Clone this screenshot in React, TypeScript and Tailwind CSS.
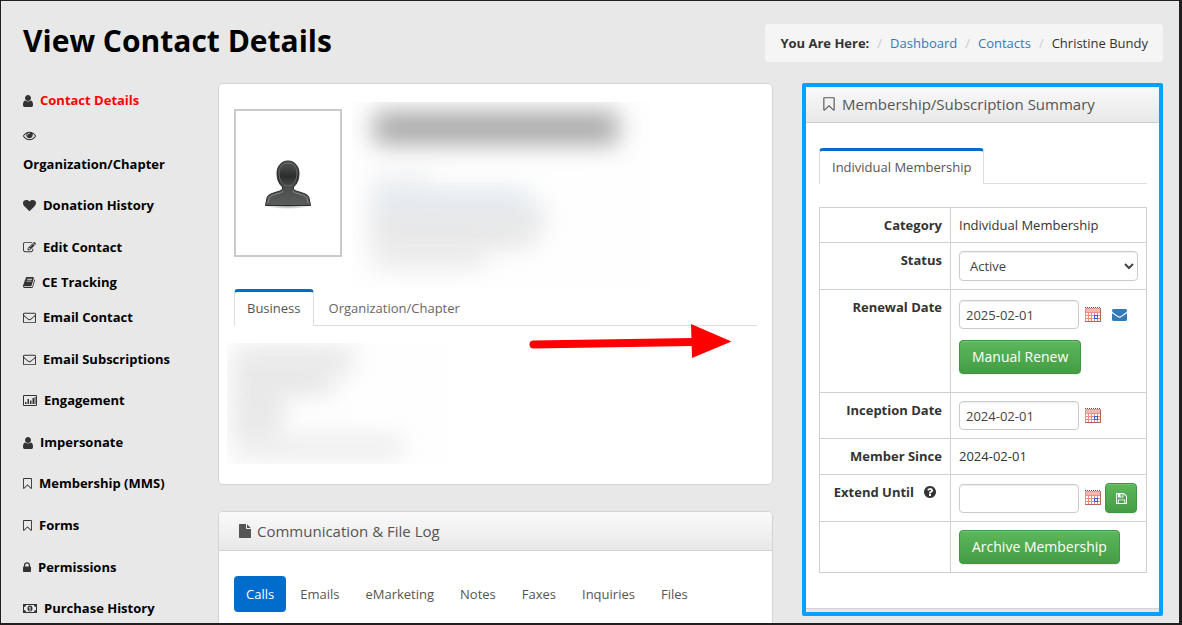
import React from 'react';

interface GlyphProps {
  viewBox: string;
  d: string;
  className?: string;
}

const Glyph: React.FC<GlyphProps> = ({ viewBox, d, className = '' }) => (
  <svg viewBox={viewBox} className={`shrink-0 ${className}`} fill="currentColor" aria-hidden="true">
    <path fillRule="evenodd" d={d} />
  </svg>
);

const glyphs = {
  user: {
    viewBox: '256 0 1280 1792',
    d: 'M1536 1399q0 109-62.5 187t-150.5 78h-854q-88 0-150.5-78t-62.5-187q0-85 8.5-160.5t31.5-152 58.5-131 94-89 134.5-34.5q131 128 313 128t313-128q76 0 134.5 34.5t94 89 58.5 131 31.5 152 8.5 160.5zm-256-887q0 159-112.5 271.5t-271.5 112.5-271.5-112.5-112.5-271.5 112.5-271.5 271.5-112.5 271.5 112.5 112.5 271.5z',
  },
  eye: {
    viewBox: '0 0 1792 1792',
    d: 'M1664 960q-152-236-381-353 61 104 61 225 0 185-131.5 316.5t-316.5 131.5-316.5-131.5-131.5-316.5q0-121 61-225-229 117-381 353 133 205 333.5 326.5t434.5 121.5 434.5-121.5 333.5-326.5zm-720-384q0-20-14-34t-34-14q-125 0-214.5 89.5t-89.5 214.5q0 20 14 34t34 14 34-14 14-34q0-86 61-147t147-61q20 0 34-14t14-34zm848 384q0 34-20 69-140 230-376.5 368.5t-499.5 138.5-499.5-139-376.5-368q-20-35-20-69t20-69q140-229 376.5-368t499.5-139 499.5 139 376.5 368q20 35 20 69z',
  },
  heart: {
    viewBox: '0 0 1792 1792',
    d: 'M896 1664q-26 0-44-18l-624-602q-10-8-27.5-26t-55.5-65.5-68-97.5-53.5-121-23.5-138q0-220 127-344t351-124q62 0 126.5 21.5t120 58 95.5 68.5 76 68q36-36 76-68t95.5-68.5 120-58 126.5-21.5q224 0 351 124t127 344q0 221-229 450l-623 600q-18 18-44 18z',
  },
  edit: {
    viewBox: '0 0 1792 1792',
    d: 'M888 1184l116-116-152-152-116 116v56h96v96h56zm440-720q-16-16-33 1l-350 350q-17 17-1 33t33-1l350-350q17-17 1-33zm80 594v190q0 119-84.5 203.5t-203.5 84.5h-832q-119 0-203.5-84.5t-84.5-203.5v-832q0-119 84.5-203.5t203.5-84.5h832q63 0 117 25 15 7 18 23 3 17-9 29l-49 49q-14 14-32 8-23-6-45-6h-832q-66 0-113 47t-47 113v832q0 66 47 113t113 47h832q66 0 113-47t47-113v-126q0-13 9-22l64-64q15-15 35-7t20 29zm-96-738l288 288-672 672h-288v-288zm444 132l-92 92-288-288 92-92q28-28 68-28t68 28l152 152q28 28 28 68t-28 68z',
  },
  book: {
    viewBox: '64 0 1664 1792',
    d: 'M1703 478q40 57 18 129l-275 906q-19 64-76.5 107.5t-122.5 43.5h-923q-77 0-148.5-53.5t-99.5-131.5q-24-67-2-127 0-4 3-27t4-37q1-8-3-21.5t-3-19.5q2-11 8-21t16.5-23.5 16.5-23.5q23-38 45-91.5t30-91.5q3-10 .5-30t-.5-28q3-11 17-28t17-23q21-36 42-92t25-90q1-9-2.5-32t.5-28q4-13 22-30.5t22-22.5q19-26 42.5-84.5t27.5-96.5q1-8-3-25.5t-2-26.5q2-8 9-18t18-23 17-21q8-12 16.5-30.5t15-35 16-36 19.5-32 26.5-23.5 36-11.5 47.5 5.5l-1 3q38-9 51-9h761q74 0 114 56t18 130l-274 906q-36 119-71.5 153.5t-128.5 34.5h-869q-27 0-38 15-11 16-1 43 24 70 144 70h923q29 0 56-15.5t35-41.5l300-987q7-22 5-57 38 15 59 43zm-1064 2q-4 13 2 22.5t20 9.5h608q13 0 25.5-9.5t16.5-22.5l21-64q4-13-2-22.5t-20-9.5h-608q-13 0-25.5 9.5t-16.5 22.5zm-83 256q-4 13 2 22.5t20 9.5h608q13 0 25.5-9.5t16.5-22.5l21-64q4-13-2-22.5t-20-9.5h-608q-13 0-25.5 9.5t-16.5 22.5z',
  },
  mail: {
    viewBox: '0 0 1792 1792',
    d: 'M1664 1504v-768q-32 36-69 66-268 206-426 338-51 43-83 67t-86.5 48.5-102.5 24.5h-2q-48 0-102.5-24.5t-86.5-48.5-83-67q-158-132-426-338-37-30-69-66v768q0 13 9.5 22.5t22.5 9.5h1472q13 0 22.5-9.5t9.5-22.5zm0-1051v-24.5l-.5-13-3-12.5-5.5-9-9-7.5-14-2.5h-1472q-13 0-22.5 9.5t-9.5 22.5q0 168 147 284 193 152 401 317 6 5 35 29.5t46 37.5 44.5 31.5 50.5 27.5 43 9h2q20 0 43-9t50.5-27.5 44.5-31.5 46-37.5 35-29.5q208-165 401-317 54-43 100.5-115.5t46.5-131.5zm128-37v1088q0 66-47 113t-113 47h-1472q-66 0-113-47t-47-113v-1088q0-66 47-113t113-47h1472q66 0 113 47t47 113z',
  },
  mailSolid: {
    viewBox: '0 256 1792 1408',
    d: 'M1792 710v794q0 66-47 113t-113 47h-1472q-66 0-113-47t-47-113v-794q44 49 101 87 362 246 497 345 57 42 92.5 65.5t94.5 48 110 24.5h2q51 0 110-24.5t94.5-48 92.5-65.5q170-123 498-345 57-39 100-87zm0-294q0 79-49 151t-122 123q-376 261-468 325-10 7-42.5 31t-54 38.5-52 32.5-57.5 27-50 9h-2q-23 0-50-9t-57.5-27-52-32.5-54-38.5-42.5-31q-91-64-262-182.5t-205-142.5q-62-42-117-115.5t-55-136.5q0-78 41.5-130t118.5-52h1472q65 0 112.5 47t47.5 113z',
  },
  chart: {
    viewBox: '0 0 14 13',
    d: 'M1 1h12a1 1 0 0 1 1 1v9a1 1 0 0 1-1 1H1a1 1 0 0 1-1-1V2a1 1 0 0 1 1-1zM1 2v9h12V2zM2 8h1.500v2H2zM4.500 5H6v5H4.500zM7 6.500h1.500V10H7zM9.500 4H11v6H9.500zM11.500 3h1v7h-1z',
  },
  bookmark: {
    viewBox: '256 0 1280 1792',
    d: 'M1408 256h-1024v1242l423-406 89-85 89 85 423 406v-1242zm12-128q23 0 44 9 33 13 52.500 41t19.500 62v1289q0 34-19.500 62t-52.500 41q-19 8-44 8-48 0-83-32l-441-424-441 424q-36 33-83 33-23 0-44-9-33-13-52.500-41t-19.500-62v-1289q0-34 19.500-62t52.500-41q21-9 44-9h1048z',
  },
  lock: {
    viewBox: '320 0 1152 1792',
    d: 'M640 768h512v-192q0-106-75-181t-181-75-181 75-75 181v192zm832 96v576q0 40-28 68t-68 28h-960q-40 0-68-28t-28-68v-576q0-40 28-68t68-28h32v-192q0-184 132-316t316-132 316 132 132 316v192h32q40 0 68 28t28 68z',
  },
  money: {
    viewBox: '0 0 14 13',
    d: 'M0 2h14v9H0zM3 3a2 2 0 0 1-2 2v3a2 2 0 0 1 2 2h8a2 2 0 0 1 2-2V5a2 2 0 0 1-2-2zM7 3.500c1.500 0 2.500 1.300 2.500 3s-1 3-2.500 3-2.500-1.300-2.500-3 1-3 2.500-3zM6.800 4.800L5.900 5.500v.6h.6V8H5.900v.6h2.200V8h-.6V4.800z',
  },
  file: {
    viewBox: '128 0 1536 1792',
    d: 'M1152 512v-472q22 14 36 28l408 408q14 14 28 36h-472zm-128 32q0 40 28 68t68 28h544v1056q0 40-28 68t-68 28h-1344q-40 0-68-28t-28-68v-1600q0-40 28-68t68-28h800v544z',
  },
  help: {
    viewBox: '128 128 1536 1536',
    d: 'M1024 1376v-192q0-14-9-23t-23-9h-192q-14 0-23 9t-9 23v192q0 14 9 23t23 9h192q14 0 23-9t9-23zm256-672q0-88-55.500-163t-138.500-116-170-41q-243 0-371 213-15 24 8 42l132 100q7 6 19 6 16 0 25-12 53-68 86-92 34-24 86-24 48 0 85.500 26t37.500 59q0 38-20 61t-68 45q-63 28-115.500 86.500t-52.500 125.500v36q0 14 9 23t23 9h192q14 0 23-9t9-23q0-19 21.500-49.500t54.500-49.500q32-18 49-28.500t46-35 44.500-48 28-60.500 12.500-81zm384 192q0 209-103 385.500t-279.500 279.500-385.500 103-385.500-103-279.500-279.500-103-385.500 103-385.500 279.500-279.500 385.500-103 385.500 103 279.500 279.500 103 385.500z',
  },
  save: {
    viewBox: '128 128 1536 1536',
    d: 'M512 1536h768v-384h-768v384zm896 0h128v-896q0-14-10-38.500t-20-34.500l-281-281q-10-10-34-20t-39-10v416q0 40-28 68t-68 28h-576q-40 0-68-28t-28-68v-416h-128v1280h128v-416q0-40 28-68t68-28h832q40 0 68 28t28 68v416zm-384-928v-320q0-13-9.500-22.500t-22.500-9.500h-192q-13 0-22.500 9.500t-9.500 22.500v320q0 13 9.500 22.500t22.500 9.500h192q13 0 22.500-9.500t9.500-22.500zm640 32v928q0 40-28 68t-68 28h-1344q-40 0-68-28t-28-68v-1344q0-40 28-68t68-28h928q40 0 88 20t76 48l280 280q28 28 48 76t20 88z',
  },
};

const menu = [
  { label: 'Contact Details', icon: glyphs.user, size: 'w-[10px] h-[14px]', row: 'h-[35px]', active: true },
  { label: 'Organization/Chapter', icon: glyphs.eye, size: 'w-[13px] h-[13px]', row: 'h-[70px]', stacked: true },
  { label: 'Donation History', icon: glyphs.heart, size: 'w-[13px] h-[13px]', row: 'h-[42px]' },
  { label: 'Edit Contact', icon: glyphs.edit, size: 'w-[13px] h-[13px]', row: 'h-[35px]' },
  { label: 'CE Tracking', icon: glyphs.book, size: 'w-[12px] h-[13px]', row: 'h-[35px]' },
  { label: 'Email Contact', icon: glyphs.mail, size: 'w-[13px] h-[13px]', row: 'h-[42px]' },
  { label: 'Email Subscriptions', icon: glyphs.mail, size: 'w-[13px] h-[13px]', row: 'h-[41px]' },
  { label: 'Engagement', icon: glyphs.chart, size: 'w-[14px] h-[13px]', row: 'h-[42px]' },
  { label: 'Impersonate', icon: glyphs.user, size: 'w-[10px] h-[14px]', row: 'h-[41px]' },
  { label: 'Membership (MMS)', icon: glyphs.bookmark, size: 'w-[9px] h-[13px]', row: 'h-[42px]' },
  { label: 'Forms', icon: glyphs.bookmark, size: 'w-[9px] h-[13px]', row: 'h-[42px]' },
  { label: 'Permissions', icon: glyphs.lock, size: 'w-[8px] h-[13px]', row: 'h-[41px]' },
  { label: 'Purchase History', icon: glyphs.money, size: 'w-[14px] h-[13px]', row: 'h-[41px]' },
];

const Sidebar: React.FC = () => (
  <nav className="col-span-2 px-[15px] pt-[8px]">
    <ul>
      {menu.map((item) => (
        <li key={item.label} className={item.row}>
          <a
            href="#"
            className={`flex font-bold ${item.stacked ? 'flex-col gap-[10px]' : 'items-center gap-[7px]'} ${
              item.active ? 'text-[#ff0000]' : 'text-black'
            }`}
          >
            <span className="flex h-[19px] items-center text-[#333]">
              <Glyph {...item.icon} className={item.size} />
            </span>
            <span className="whitespace-nowrap leading-[19px]">{item.label}</span>
          </a>
        </li>
      ))}
    </ul>
  </nav>
);

const Breadcrumb: React.FC = () => (
  <nav aria-label="Breadcrumb" className="rounded bg-[#f5f5f5] px-[15px] py-[10px]">
    <ol className="flex leading-[18px]">
      <li className="font-bold">You Are Here:</li>
      <li>
        <span className="px-[8px] text-[#ccc]">/</span>
        <a href="#" className="text-[#337ab7]">Dashboard</a>
      </li>
      <li>
        <span className="px-[8px] text-[#ccc]">/</span>
        <a href="#" className="text-[#337ab7]">Contacts</a>
      </li>
      <li>
        <span className="px-[8px] text-[#ccc]">/</span>
        Christine Bundy
      </li>
    </ol>
  </nav>
);

const Avatar: React.FC = () => (
  <svg viewBox="0 0 48 52" className="h-[52px] w-[48px]" role="img" aria-label="No photo">
    <defs>
      <linearGradient id="bust" x1="0" y1="0" x2="0" y2="1">
        <stop offset="0" stopColor="#555756" />
        <stop offset="0.35" stopColor="#2c2e2d" />
        <stop offset="0.6" stopColor="#4b4d4c" />
        <stop offset="1" stopColor="#5b5d5c" />
      </linearGradient>
      <radialGradient id="ground">
        <stop offset="0" stopColor="#000" stopOpacity="0.4" />
        <stop offset="1" stopColor="#000" stopOpacity="0" />
      </radialGradient>
    </defs>
    <ellipse cx="24" cy="49" rx="23" ry="3" fill="url(#ground)" />
    <g transform="translate(0 2)">
      <path
        d="M24 2c6.500 0 11 5 11 12.500 0 6-2 10.500-5.500 13.500v2c1 2 5 2.500 9 4 4.500 1.500 6 2.500 6.500 5l1.500 7.500H1.500L3 39c.5-2.500 2-3.500 6.500-5 4-1.500 8-2 9-4v-2C15 25 13 20.500 13 14.500 13 7 17.500 2 24 2z"
        fill="url(#bust)"
        stroke="#2a2a2a"
      />
      <path
        d="M3.500 44.500L5 39.500c.5-2 3-3 6-4 4-1.200 7-2 8.500-3.500M44.500 44.500L43 39.500c-.5-2-3-3-6-4-4-1.200-7-2-8.500-3.500"
        fill="none"
        stroke="#858786"
      />
      <path
        d="M24 4c5.500 0 9 4.300 9 10.500S29.500 27 24 27s-9-6.300-9-12.500S18.500 4 24 4z"
        fill="none"
        stroke="#6a6c6b"
      />
    </g>
  </svg>
);

const CalendarIcon: React.FC = () => (
  <svg viewBox="0 0 16 16" className="h-4 w-4" shapeRendering="crispEdges" aria-hidden="true">
    <path fill="#fff" d="M0 1h16v14H0z" />
    <path fill="#f6b5ae" d="M0 1h16v4H0z" />
    <path stroke="#7d4642" strokeDasharray="1 1" d="M0 .5h16" />
    <path stroke="#c98580" strokeDasharray="1 1" d="M1 1.500h15" />
    <path stroke="#f28b84" fill="none" d="M.5 2v13M3.500 5v10M6.500 5v10M9.500 5v10M12.500 5v10M0 5.500h16M0 8.500h16M0 11.500h16" />
    <path stroke="#b5635e" fill="none" d="M15.500 2v13M0 14.500h16" />
    <path stroke="#2f62d9" fill="#fff" d="M9.500 8.500h3v3h-3z" />
  </svg>
);

const profileLines = [
  'mt-[10px] h-[32px] w-[244px] bg-[#a6a6a6]',
  'mt-[32px] h-[12px] w-[58px] bg-[#e9ebed]',
  'mt-[3px] h-[18px] w-[155px] bg-[#dbe5ee]',
  'h-[18px] w-[170px] bg-[#dfe1e4]',
  'h-[18px] w-[160px] bg-[#e0e0e0]',
  'mt-[2px] h-[18px] w-[110px] bg-[#e4e4e4]',
];

const addressLines = [
  'h-[20px] w-[118px] bg-[#e2e2e2]',
  'h-[20px] w-[98px] bg-[#e0e0e0]',
  'h-[20px] w-[48px] bg-[#e0e0e0]',
  'h-[20px] w-[44px] bg-[#e0e0e0]',
  'h-[18px] w-[166px] bg-[#e8e8e8]',
];

const Arrow: React.FC = () => (
  <svg
    viewBox="0 0 204 36"
    className="pointer-events-none absolute left-[310px] top-[239px] h-9 w-[204px]"
    aria-hidden="true"
  >
    <path d="M4.500 21.500L164 19" stroke="#ff0000" strokeWidth="8" strokeLinecap="round" />
    <path d="M162 1L202.500 18.500L163 35z" fill="#ff0000" />
  </svg>
);

const ProfileCard: React.FC = () => (
  <section className="relative rounded-[5px] border border-[#d3d3d3] bg-white px-[15px] pb-[20px] pt-[18px]">
    <div className="flex gap-[10px]">
      <div className="mt-[7px] flex h-[148px] w-[108px] items-center justify-center border-2 border-[#c9cbcb]">
        <Avatar />
      </div>
      <div className="h-[186px] w-[300px] overflow-hidden bg-[#fefefe] pl-[22px]" aria-hidden="true">
        {profileLines.map((line) => (
          <div key={line} className={`blur-[12px] ${line}`} />
        ))}
      </div>
    </div>
    <div className="mt-px flex border-b border-[#ddd]" role="tablist">
      <button
        role="tab"
        aria-selected="true"
        className="-mb-px h-[37px] rounded-t border-x border-t-3 border-x-[#ddd] border-t-[#006dcc] bg-white px-[12px] text-[#555]"
      >
        Business
      </button>
      <button role="tab" aria-selected="false" className="px-[15px] pt-[3px] text-[#666]">
        Organization/Chapter
      </button>
    </div>
    <div
      className="-ml-[7px] mt-[17px] flex h-[121px] w-[220px] flex-col gap-[2px] overflow-hidden bg-[#fefefe] pl-[8px] pt-[7px]"
      aria-hidden="true"
    >
      {addressLines.map((line) => (
        <div key={line} className={`shrink-0 blur-[12px] ${line}`} />
      ))}
    </div>
    <Arrow />
  </section>
);

const logTabs = ['Calls', 'Emails', 'eMarketing', 'Notes', 'Faxes', 'Inquiries', 'Files'];

const FileLog: React.FC = () => (
  <section className="mt-[26px] h-[300px] overflow-hidden rounded-[5px] border border-[#d3d3d3] bg-white">
    <h2 className="flex h-[39px] items-center gap-[6px] border-b border-[#d3d3d3] bg-gradient-to-b from-[#fafafa] to-[#e8e8e8] px-[20px] text-[15px] text-[#555]">
      <Glyph {...glyphs.file} className="h-[14px] w-[12px]" />
      Communication &amp; File Log
    </h2>
    <div className="flex gap-[2px] px-[15px] pt-[25px]" role="tablist">
      {logTabs.map((tab, i) => (
        <button
          key={tab}
          role="tab"
          aria-selected={i === 0}
          className={`h-[36px] rounded px-[12px] pt-px ${i === 0 ? 'bg-[#006dcc] text-white' : 'text-[#555]'}`}
        >
          {tab}
        </button>
      ))}
    </div>
  </section>
);

const labelCell = 'border border-[#d0d0d0] p-[8px] text-right align-top font-bold';
const valueCell = 'border border-[#d0d0d0] p-[8px] align-top';
const field = 'rounded border border-[#ccc] bg-white text-[#444] shadow-[inset_0_1px_1px_rgba(0,0,0,0.075)]';
const greenButton =
  'rounded border border-[#419641] bg-gradient-to-b from-[#5cb85c] to-[#449d44] text-white shadow-[inset_0_1px_0_rgba(255,255,255,0.15),0_1px_1px_rgba(0,0,0,0.075)]';

const DateField: React.FC<{ id: string; value: string }> = ({ id, value }) => (
  <>
    <input id={id} type="text" defaultValue={value} className={`h-[29px] w-[120px] px-[6px] ${field}`} />
    <button type="button" aria-label="Pick a date" className="ml-[6px]">
      <CalendarIcon />
    </button>
  </>
);

const MembershipCard: React.FC = () => (
  <section className="rounded-[2px] border-4 border-[#00a2ff] pb-[3px]">
    <div className="border-b border-[#d3d3d3] bg-white">
      <h2 className="flex h-[36px] items-center gap-[7px] border-b border-[#ccc] bg-gradient-to-b from-[#f9f9f9] to-[#e8e8e8] px-[17px] pb-px text-[15px] text-[#555]">
        <Glyph {...glyphs.bookmark} className="h-[16px] w-[12px]" />
        Membership/Subscription Summary
      </h2>
      <div className="pb-[35px] pl-[13px] pr-[12px] pt-[25px]">
        <div className="flex border-b border-[#ddd]" role="tablist">
          <button
            role="tab"
            aria-selected="true"
            className="-mb-px h-[36px] rounded-t border-x border-t-3 border-x-[#ddd] border-t-[#006dcc] bg-white px-[12px] text-[#555]"
          >
            Individual Membership
          </button>
        </div>
        <table className="mt-[23px] w-full border-collapse leading-[18px]">
          <tbody>
            <tr className="h-[35px]">
              <th scope="row" className={`w-[131px] ${labelCell}`}>Category</th>
              <td className={valueCell}>Individual Membership</td>
            </tr>
            <tr className="h-[47px]">
              <th scope="row" className={labelCell}>
                <label htmlFor="status">Status</label>
              </th>
              <td className={valueCell}>
                <select id="status" className={`block h-[30px] w-full px-[6px] ${field}`}>
                  <option>Active</option>
                  <option>Inactive</option>
                </select>
              </td>
            </tr>
            <tr className="h-[103px]">
              <th scope="row" className={labelCell}>
                <label htmlFor="renewal">Renewal Date</label>
              </th>
              <td className={valueCell}>
                <div className="mt-[2px] flex items-center">
                  <DateField id="renewal" value="2025-02-01" />
                  <a href="#" aria-label="Send renewal email" className="ml-[11px] text-[#337ab7]">
                    <Glyph {...glyphs.mailSolid} className="h-[12px] w-[15px]" />
                  </a>
                </div>
                <button type="button" className={`mt-[11px] h-[34px] px-[12px] text-[14px] ${greenButton}`}>
                  Manual Renew
                </button>
              </td>
            </tr>
            <tr className="h-[46px]">
              <th scope="row" className={labelCell}>
                <label htmlFor="inception">Inception Date</label>
              </th>
              <td className={valueCell}>
                <div className="flex items-center">
                  <DateField id="inception" value="2024-02-01" />
                </div>
              </td>
            </tr>
            <tr className="h-[36px]">
              <th scope="row" className={labelCell}>Member Since</th>
              <td className={valueCell}>2024-02-01</td>
            </tr>
            <tr className="h-[47px]">
              <th scope="row" className={labelCell}>
                <div className="flex items-center justify-end gap-[10px] pr-[6px]">
                  <label htmlFor="extend">Extend Until</label>
                  <Glyph {...glyphs.help} className="h-[12px] w-[12px]" />
                </div>
              </th>
              <td className={valueCell}>
                <div className="flex items-center">
                  <DateField id="extend" value="" />
                  <button
                    type="button"
                    aria-label="Save"
                    className={`ml-[4px] flex h-[30px] w-[32px] items-center justify-center ${greenButton}`}
                  >
                    <Glyph {...glyphs.save} className="h-[11px] w-[11px]" />
                  </button>
                </div>
              </td>
            </tr>
            <tr className="h-[51px]">
              <th scope="row" className={labelCell} />
              <td className={valueCell}>
                <button type="button" className={`block h-[34px] px-[12px] text-[14px] ${greenButton}`}>
                  Archive Membership
                </button>
              </td>
            </tr>
          </tbody>
        </table>
      </div>
    </div>
  </section>
);

export default function App() {
  return (
    <div className="h-screen overflow-hidden border-b-2 border-l border-r-3 border-t border-[#231f20] bg-[#e8e8e8] pl-[7px] pr-px font-['Open_Sans',sans-serif] text-[13px] text-[#333]">
      <header className="flex items-start justify-between px-[15px] pt-[23px]">
        <h1 className="-mt-[2px] text-[30px] font-bold leading-[38px] text-black">View Contact Details</h1>
        <Breadcrumb />
      </header>
      <div className="mt-[21px] grid grid-cols-12 items-start">
        <Sidebar />
        <main className="col-span-6 px-[15px]">
          <ProfileCard />
          <FileLog />
        </main>
        <aside className="col-span-4 pl-[14px] pr-[15px]">
          <MembershipCard />
        </aside>
      </div>
    </div>
  );
}
